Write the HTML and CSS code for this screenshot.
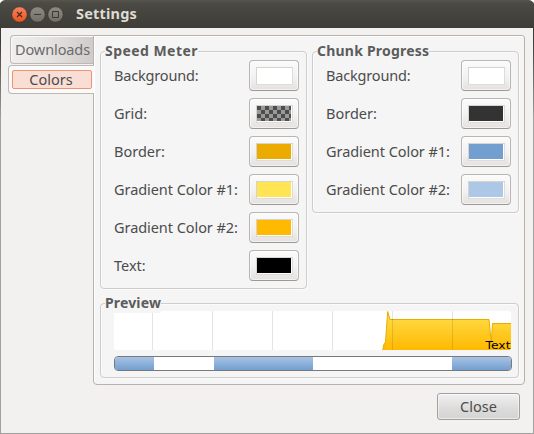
FILE: index.html
```html
<!DOCTYPE html>
<html lang="en">
<head>
<meta charset="utf-8">
<title>Settings</title>
<link rel="stylesheet" href="styles.css">
</head>
<body>
<div class="window">
  <header class="titlebar">
    <svg class="controls" width="66" height="28" viewBox="0 0 66 28">
      <defs>
        <linearGradient id="close" x1="0" y1="0" x2="0" y2="1"><stop offset="0" stop-color="#f58460"/><stop offset="1" stop-color="#e9531f"/></linearGradient>
        <linearGradient id="plain" x1="0" y1="0" x2="0" y2="1"><stop offset="0" stop-color="#8d8b83"/><stop offset="1" stop-color="#706e67"/></linearGradient>
      </defs>
      <circle cx="19.500" cy="14.500" r="7.700" fill="url(#close)" stroke="#34332e" stroke-width=".6"/>
      <circle cx="37.500" cy="14.500" r="7.700" fill="url(#plain)" stroke="#34332e" stroke-width=".6"/>
      <circle cx="55.500" cy="14.500" r="7.700" fill="url(#plain)" stroke="#34332e" stroke-width=".6"/>
      <path d="M17 12l5 5M22 12l-5 5" stroke="#51261a" stroke-width="1.2"/>
      <path d="M34 14.500h7M52.500 11.500h6v6h-6z" stroke="#3a3934" fill="none"/>
    </svg>
    <h1 class="title">Settings</h1>
  </header>
  <main class="notebook">
    <nav class="tabs">
      <div class="tab"><span class="t-downloads">Downloads</span></div>
      <div class="tab active"><span class="focus"><span class="t-colors">Colors</span></span></div>
    </nav>
    <div class="page">
      <section class="group speed">
        <h2 class="legend l-speed">Speed Meter</h2>
        <div class="row"><span class="t-bg">Background:</span><button class="well"><i class="swatch white"></i></button></div>
        <div class="row"><span class="t-grid">Grid:</span><button class="well"><i class="swatch checker"></i></button></div>
        <div class="row"><span class="t-border">Border:</span><button class="well"><i class="swatch gold"></i></button></div>
        <div class="row"><span class="t-grad">Gradient Color #1:</span><button class="well"><i class="swatch yellow"></i></button></div>
        <div class="row"><span class="t-grad">Gradient Color #2:</span><button class="well"><i class="swatch amber"></i></button></div>
        <div class="row"><span class="t-text">Text:</span><button class="well"><i class="swatch black"></i></button></div>
      </section>
      <section class="group chunk">
        <h2 class="legend l-chunk">Chunk Progress</h2>
        <div class="row"><span class="t-bg">Background:</span><button class="well"><i class="swatch white"></i></button></div>
        <div class="row"><span class="t-border">Border:</span><button class="well"><i class="swatch dark"></i></button></div>
        <div class="row"><span class="t-grad">Gradient Color #1:</span><button class="well"><i class="swatch blue"></i></button></div>
        <div class="row"><span class="t-grad">Gradient Color #2:</span><button class="well"><i class="swatch sky"></i></button></div>
      </section>
      <section class="group preview">
        <h2 class="legend l-preview">Preview</h2>
        <svg class="meter" width="397" height="39" viewBox="0 0 397 39">
          <defs>
            <linearGradient id="speed" gradientUnits="userSpaceOnUse" x1="0" y1="0" x2="0" y2="39"><stop offset="0" stop-color="#ffe04f"/><stop offset="1" stop-color="#ffb900"/></linearGradient>
            <clipPath id="area"><rect width="397" height="39" rx="2"/></clipPath>
          </defs>
          <rect width="397" height="39" rx="2" fill="#fff"/>
          <path clip-path="url(#area)" d="M268.500 40L270 33L271.500 31L273.700 0.500L276 8.500H375L377.300 32L378.500 12.500H398V40H268.500z" fill="url(#speed)" stroke="#e8ab00"/>
          <path d="M38.500 0v39M98.500 0v39M158.500 0v39M218.500 0v39M278.500 0v39M338.500 0v39" stroke="#000" stroke-opacity=".11"/>
          <text class="meter-text" x="371.500" y="38" textLength="25" lengthAdjust="spacingAndGlyphs">Text</text>
        </svg>
        <div class="chunks"><i class="chunk-a"></i><i class="chunk-b"></i><i class="chunk-c"></i></div>
      </section>
    </div>
  </main>
  <footer class="actions"><button class="close"><span class="t-close">Close</span></button></footer>
</div>
</body>
</html>
```

FILE: styles.css
```css
* { box-sizing: border-box; }
body {
  margin: 0;
  background: #fff;
  font: 14.5px/20px "Noto Sans", "Open Sans", sans-serif;
  color: #4c4c4c;
}
button { font: inherit; color: inherit; padding: 0; }
.window {
  width: 534px;
  height: 434px;
  padding: 0 1px;
  background:
    linear-gradient(#3c3b37 40px, #a3a19f 120px) left / 1px 100% no-repeat,
    linear-gradient(#3c3b37 40px, #a3a19f 120px) right / 1px 100% no-repeat,
    #f2f1f0;
  border-bottom: 1px solid #a3a19f;
  border-radius: 5px 5px 0 0;
  overflow: hidden;
}
.titlebar {
  height: 28px;
  margin: 0 -1px;
  display: flex;
  align-items: center;
  background: linear-gradient(#56554e, #4b4a44 3px, #3d3c37);
  border-radius: 5px 5px 0 0;
}
.controls { flex: none; }
.title {
  margin: 0 0 0 10px;
  position: relative;
  top: -1px;
  font-size: 14.5px;
  font-weight: 700;
  color: #dfdbd2;
  letter-spacing: .2px;
}
.notebook { display: flex; padding: 7px 8px 0 7px; }
.tabs { width: 86px; flex: none; position: relative; z-index: 1; }
.tab {
  height: 29px;
  margin: 0 1px 0 2px;
  display: flex;
  align-items: center;
  justify-content: center;
  border: 1px solid #bdb8b3;
  border-right: 0;
  border-radius: 4px 0 0 4px;
  background: linear-gradient(90deg, #f0efee, #e6e4e3 45%, #cfcbc8);
  box-shadow: inset 1px 1px #fafafa;
  color: #6c6b69;
}
.t-downloads { letter-spacing: -.1px; padding: 0 0 2px 1px; }
.tab.active {
  margin: 1px 0 0;
  padding: 3px 2px 3px 3px;
  background: #fafafa;
  color: #4c4c4c;
}
.focus {
  width: 100%;
  height: 19px;
  display: flex;
  align-items: center;
  justify-content: center;
  border: 1px solid #f0936e;
  border-radius: 2px;
  background: #f8ded4;
}
.t-colors { padding: 0 2px 2px 0; }
.page {
  width: 432px;
  height: 350px;
  margin-left: -1px;
  padding: 15px 6px 0 6px;
  display: grid;
  grid-template-columns: 207px 207px;
  grid-template-rows: 238px 75px;
  column-gap: 5px;
  row-gap: 14px;
  border: 1px solid #b8b2ac;
  border-radius: 0 3px 4px 4px;
  background: #f5f5f5;
  box-shadow: inset 1px 1px #fff;
}
.group {
  position: relative;
  border: 1px solid #cfccca;
  border-radius: 4px;
  box-shadow: inset 1px 1px #fbfbfb, 1px 1px #fbfbfb;
  padding: 5px 7px 0 13px;
}
.chunk { height: 162px; }
.preview { grid-column: 1 / 3; padding: 7px 6px 0 13px; }
.legend {
  position: absolute;
  left: 4px;
  top: -11px;
  margin: 0;
  background: #f5f5f5;
  font-size: 14px;
  line-height: 20px;
  font-weight: 700;
  white-space: nowrap;
  color: #5c5c5c;
}
.l-speed { letter-spacing: .45px; }
.l-chunk { letter-spacing: .22px; }
.l-preview { letter-spacing: .15px; }
.row {
  height: 38px;
  display: flex;
  align-items: center;
  justify-content: space-between;
  white-space: nowrap;
}
.row > span { position: relative; top: -1px; }
.t-bg { letter-spacing: -.18px; }
.t-grad { letter-spacing: -.06px; }
.well {
  width: 50px;
  height: 31px;
  margin-top: -1px;
  display: flex;
  align-items: center;
  justify-content: center;
  border: 1px solid #b9b5b2;
  border-bottom-color: #9d9894;
  border-radius: 4px;
  background: linear-gradient(#fbfbfb, #f3f2f2 55%, #e4e1df);
  box-shadow: inset 0 0 0 1px rgba(255, 255, 255, .55);
}
.swatch {
  width: 37px;
  height: 18px;
  border: 1px solid #d7d3cf;
  border-right-color: #dedbd8;
  border-bottom-color: #dedbd8;
  box-shadow: inset -1px -1px #fff;
}
.white { background: #fff; }
.checker {
  background: repeating-conic-gradient(#999 0 25%, #4d4d4d 0 50%) 0 0 / 8px 8px;
}
.gold { background: #ebab00; }
.yellow { background: #ffe454; }
.amber { background: #ffb900; }
.black { background: #000; }
.dark { background: #333; }
.blue { background: #729fcf; }
.sky { background: #adc7e7; }
.meter { display: block; overflow: visible; }
.meter-text { font: 11px "DejaVu Sans", sans-serif; fill: #000; }
.chunks {
  display: grid;
  grid-template-columns: 39px 99px 59px;
  column-gap: 60px;
  width: 398px;
  height: 15px;
  margin-top: 6px;
  border: 1px solid #77797c;
  border-radius: 4px;
  background: #fff;
  overflow: hidden;
}
.chunks i { background: linear-gradient(#a8c3e4, #739fcf); }
.chunk-c { margin-left: 79px; width: 59px; }
.actions { display: flex; justify-content: flex-end; padding: 8px 13px 0 0; }
.close {
  width: 83px;
  height: 27px;
  padding-bottom: 2px;
  border: 1px solid #a29f9c;
  border-radius: 3px;
  background: linear-gradient(#f1f1f1, #dcdbdb 60%, #d5d4d3);
  box-shadow: inset 0 0 0 1px rgba(255, 255, 255, .5);
}
```
